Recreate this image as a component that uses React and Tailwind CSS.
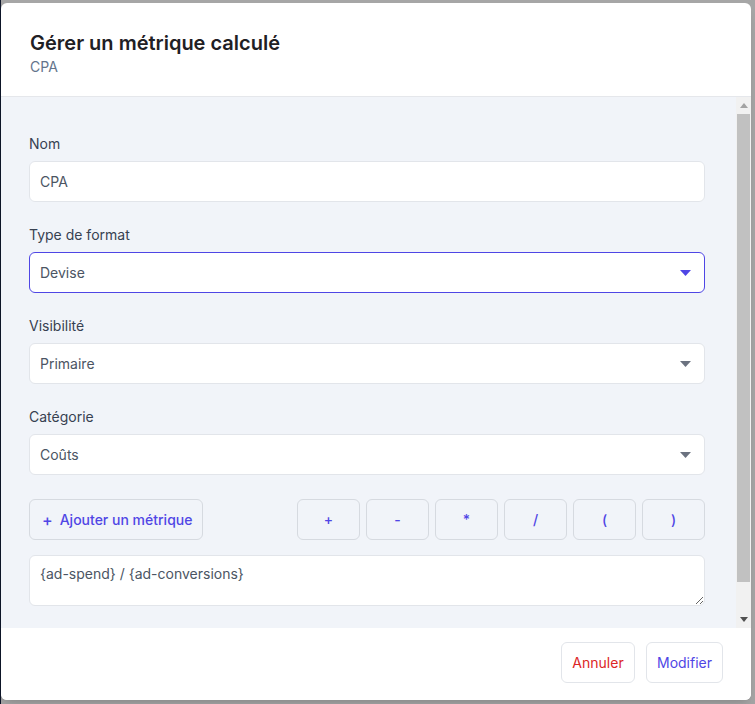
import React from "react";

function Caret({ color }) {
  return (
    <svg width="11" height="6" viewBox="0 0 11 6" className="shrink-0">
      <path d="M0 0 L11 0 L5.5 6 Z" fill={color} />
    </svg>
  );
}

function Field({ label, children }) {
  return (
    <div className="mb-[23px]">
      <div className="text-sm leading-5 text-[#374151] mb-[7px]">{label}</div>
      {children}
    </div>
  );
}

function Select({ value, focused }) {
  return (
    <div
      className={
        focused
          ? "h-[41px] rounded-md bg-white border border-[#4f46e5] flex items-center justify-between pl-[10px] pr-[13px]"
          : "h-[41px] rounded-md bg-white border border-[#e2e5ea] flex items-center justify-between pl-[10px] pr-[13px]"
      }
    >
      <span className="text-sm text-[#4b5563]">{value}</span>
      <Caret color={focused ? "#4f46e5" : "#6b7280"} />
    </div>
  );
}

function Scrollbar() {
  return (
    <div className="w-[15px] shrink-0 bg-[#f1f1f1] flex flex-col">
      <div className="h-[17px] flex items-center justify-center">
        <svg width="8" height="5" viewBox="0 0 8 5">
          <path d="M0 5 L8 5 L4 0 Z" fill="#a3a3a3" />
        </svg>
      </div>
      <div className="h-[468px] mx-[1px] bg-[#c1c1c1]" />
      <div className="flex-1" />
      <div className="h-[17px] flex items-center justify-center">
        <svg width="8" height="5" viewBox="0 0 8 5">
          <path d="M0 0 L8 0 L4 5 Z" fill="#505050" />
        </svg>
      </div>
    </div>
  );
}

export default function App() {
  const ops = ["+", "-", "*", "/", "(", ")"];
  return (
    <div
      className="w-[755px] h-[704px] bg-[#a6a6a6] flex overflow-hidden"
      style={{ fontFamily: "Inter, 'Noto Sans', sans-serif" }}
    >
      <div className="w-[1px] h-full bg-[#0f172a] shrink-0" />
      <div className="mt-[3px] w-[750px] h-[697px] bg-white rounded-md flex flex-col overflow-hidden shadow-lg">
        <div className="h-[94px] shrink-0 border-b border-[#e5e7eb] pl-[29px] pt-[26px]">
          <div className="text-xl leading-7 font-semibold text-[#1f2024]">Gérer un métrique calculé</div>
          <div className="text-sm leading-5 text-[#64748b]">CPA</div>
        </div>
        <div className="flex-1 flex bg-[#f1f4f9] overflow-hidden">
          <div className="flex-1 overflow-hidden pl-[28px] pr-[31px] pt-[37px]">
            <Field label="Nom">
              <div className="h-[41px] rounded-md bg-white border border-[#e2e5ea] flex items-center pl-[10px]">
                <span className="text-sm text-[#4b5563]">CPA</span>
              </div>
            </Field>
            <Field label="Type de format">
              <Select value="Devise" focused />
            </Field>
            <Field label="Visibilité">
              <Select value="Primaire" />
            </Field>
            <Field label="Catégorie">
              <Select value="Coûts" />
            </Field>
            <div className="mt-[24px] flex items-center justify-between">
              <button className="h-[41px] w-[174px] rounded-md border border-[#d6dae0] bg-[#f1f4f9] flex items-center pl-[12px] gap-[7px] text-sm font-medium text-[#5046e5]">
                <span className="text-base leading-none">+</span>
                <span>Ajouter un métrique</span>
              </button>
              <div className="flex gap-[6px]">
                {ops.map((o) => (
                  <button
                    key={o}
                    className="h-[41px] w-[63px] rounded-md border border-[#d6dae0] bg-[#f1f4f9] text-sm font-medium text-[#5046e5] flex items-center justify-center"
                  >
                    {o}
                  </button>
                ))}
              </div>
            </div>
            <textarea
              className="mt-[15px] block w-full h-[51px] rounded-md bg-white border border-[#e2e5ea] px-[10px] pt-[8px] text-sm text-[#4b5563] outline-none"
              defaultValue="{ad-spend} / {ad-conversions}"
            />
          </div>
          <Scrollbar />
        </div>
        <div className="h-[72px] shrink-0 bg-white flex justify-end items-start pt-[14px] pr-[28px] gap-[11px]">
          <button className="h-[41px] w-[74px] rounded-md border border-[#e2e5ea] bg-white text-sm text-[#dc2626]">
            Annuler
          </button>
          <button className="h-[41px] w-[77px] rounded-md border border-[#e2e5ea] bg-white text-sm text-[#5046e5]">
            Modifier
          </button>
        </div>
      </div>
    </div>
  );
}
